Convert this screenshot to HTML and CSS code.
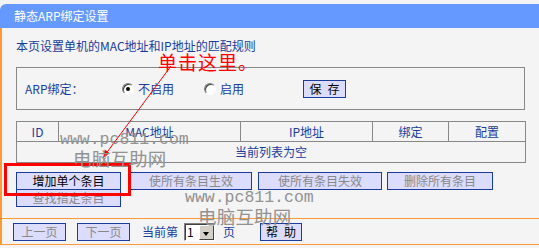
FILE: index.html
```html
<!DOCTYPE html>
<html lang="zh-CN">
<head>
  <meta charset="UTF-8">
  <title>静态ARP绑定设置</title>
  <link rel="stylesheet" href="styles.css">
</head>
<body>
<div class="page">
  <div class="title">静态ARP绑定设置</div>

  <div class="frame">
    <div class="main">
      <p class="desc">本页设置单机的MAC地址和IP地址的匹配规则</p>

      <!-- ARP binding switch -->
      <div class="bind-box">
        <span class="bind-label">ARP绑定：</span>
        <span class="radio radio-off"><span class="dot checked"></span>不启用</span>
        <span class="radio radio-on"><span class="dot"></span>启用</span>
        <button class="btn btn-dark btn-save">保&ensp;存</button>
      </div>

      <!-- binding list -->
      <table class="arp-table">
        <col class="c-id"><col class="c-mac"><col class="c-ip"><col class="c-bind"><col class="c-cfg">
        <tr>
          <th>ID</th>
          <th>MAC地址</th>
          <th>IP地址</th>
          <th>绑定</th>
          <th>配置</th>
        </tr>
        <tr>
          <td colspan="5">当前列表为空</td>
        </tr>
      </table>

      <div class="btn-row">
        <button class="btn btn-dark btn-add">增加单个条目</button>
        <button class="btn btn-on">使所有条目生效</button>
        <button class="btn btn-offall">使所有条目失效</button>
        <button class="btn btn-del">删除所有条目</button>
      </div>
      <div class="btn-row second">
        <button class="btn btn-add">查找指定条目</button>
      </div>
    </div>

    <div class="pager">
      <button class="btn btn-page">上一页</button>
      <button class="btn btn-page btn-next">下一页</button>
      <span class="page-text">当前第</span>
      <span class="select"><span class="select-value">1</span><span class="select-arrow"></span></span>
      <span class="page-unit">页</span>
      <button class="btn btn-dark btn-help">帮&ensp;助</button>
    </div>
  </div>

  <!-- annotations drawn over the page -->
  <div class="note">单击这里。</div>
  <svg class="arrow" width="539" height="248" viewBox="0 0 539 248">
    <line x1="171" y1="66" x2="105" y2="155" stroke="#ff0000" stroke-width="1"/>
    <polygon points="103,158 109.6,153.2 104.8,149.6" fill="#ff0000"/>
  </svg>
  <div class="mark-box"></div>
  <div class="wm wm-url wm-1">www.pc811.com</div>
  <div class="wm wm-name wm-1b">电脑互助网</div>
  <div class="wm wm-url wm-2">www.pc811.com</div>
  <div class="wm wm-name wm-2b">电脑互助网</div>
</div>
</body>
</html>
```

FILE: styles.css
```css
body {
  margin: 0;
  background-color: #f4f4f4;
  font-family: "Noto Sans CJK SC", sans-serif;
  font-size: 12px;
  color: #1a3c9c;
}

.page {
  position: relative;
  width: 539px;
  height: 248px;
  overflow: hidden;
}

.title {
  margin-top: 4px;
  height: 24px;
  line-height: 24px;
  padding-left: 14px;
  background-color: #6699ff;
  color: #fff;
  border-top-left-radius: 6px;
}

.frame {
  border-left: 2px solid #ff9933;
}

.main {
  padding: 10px 0 11px 14px;
}

.desc {
  margin: 0;
  line-height: 16px;
}

/* ARP switch box */
.bind-box {
  box-sizing: border-box;
  margin-top: 13px;
  width: 509px;
  height: 43px;
  padding-left: 8px;
  border: 1px solid #888;
  display: flex;
  align-items: center;
}

.bind-label {
  width: 97px;
}

.radio {
  display: flex;
  align-items: center;
}
.radio-off { width: 82px; }
.radio-on { width: 99px; }

.dot {
  box-sizing: border-box;
  width: 12px;
  height: 12px;
  margin-right: 4px;
  border-radius: 50%;
  border: 1px solid;
  border-color: #808080 #fff #fff #808080;
  background-color: #fff;
  box-shadow: inset 1px 1px 0 #404040;
  position: relative;
}
.dot.checked::after {
  content: "";
  position: absolute;
  left: 3px;
  top: 3px;
  width: 4px;
  height: 4px;
  border-radius: 50%;
  background-color: #000;
}

/* buttons */
.btn {
  box-sizing: border-box;
  height: 18px;
  padding: 0;
  border: 1px solid #1a3c9c;
  background-color: #dcdcfc;
  color: #888;
  font-family: inherit;
  font-size: 12px;
  line-height: 16px;
}
.btn-dark { color: #000; }
.btn-save { width: 43px; }

/* list table */
.arp-table {
  margin-top: 11px;
  width: 509px;
  border-collapse: collapse;
  table-layout: fixed;
}
.c-id { width: 42px; }
.c-mac { width: 182px; }
.c-ip { width: 132px; }
.c-bind { width: 76px; }
.c-cfg { width: 77px; }

.arp-table th,
.arp-table td {
  border: 1px solid #888;
  padding: 0;
  font-weight: normal;
  text-align: center;
  line-height: 14px;
}
.arp-table th { height: 19px; }
.arp-table td { height: 20px; }

.btn-row {
  display: flex;
  margin-top: 9px;
}
.btn-row.second {
  margin-top: -1px;
}
.btn-add { width: 105px; }
.btn-on { width: 122px; margin-left: 9px; }
.btn-offall { width: 124px; margin-left: 6px; }
.btn-del { width: 106px; margin-left: 5px; }

/* pager */
.pager {
  height: 25px;
  padding-left: 11px;
  border-top: 1px solid #ff9933;
  border-bottom: 1px solid #ff9933;
  display: flex;
  align-items: center;
}
.btn-page { width: 53px; }
.btn-next { margin-left: 11px; }
.page-text { margin-left: 12px; }

.select {
  box-sizing: border-box;
  margin-left: 6px;
  width: 31px;
  height: 18px;
  display: flex;
  border: 1px solid;
  border-color: #808080 #fff #fff #808080;
  box-shadow: inset 1px 1px 0 #404040;
  background-color: #fff;
}
.select-value {
  flex: 1;
  padding-left: 2px;
  color: #000;
  line-height: 16px;
}
.select-arrow {
  box-sizing: border-box;
  width: 15px;
  margin: 1px 0 0 0;
  background-color: #d4d0c8;
  border: 1px solid;
  border-color: #fff #404040 #404040 #fff;
  position: relative;
}
.select-arrow::after {
  content: "";
  position: absolute;
  left: 3px;
  top: 6px;
  border-left: 3.5px solid transparent;
  border-right: 3.5px solid transparent;
  border-top: 4px solid #000;
}

.page-unit { margin-left: 8px; }
.btn-help { width: 42px; margin-left: 25px; }

/* annotations */
.note {
  position: absolute;
  left: 158px;
  top: 52px;
  font-size: 19px;
  line-height: 19px;
  letter-spacing: 1px;
  color: #ff0000;
}

.arrow {
  position: absolute;
  left: 0;
  top: 0;
}

.mark-box {
  position: absolute;
  box-sizing: border-box;
  left: 4px;
  top: 163px;
  width: 127px;
  height: 33px;
  border: 3px solid #ff0000;
}

.wm {
  position: absolute;
  color: #929292;
  white-space: nowrap;
}
.wm-url {
  font-family: "Liberation Mono", monospace;
  font-size: 16.5px;
  line-height: 13px;
}
.wm-name {
  font-size: 18.5px;
  line-height: 16px;
  letter-spacing: 0.2px;
}
.wm-1 { left: 60px; top: 133px; }
.wm-1b { left: 73px; top: 150px; }
.wm-2 { left: 185px; top: 191px; }
.wm-2b { left: 198px; top: 208px; }
```
